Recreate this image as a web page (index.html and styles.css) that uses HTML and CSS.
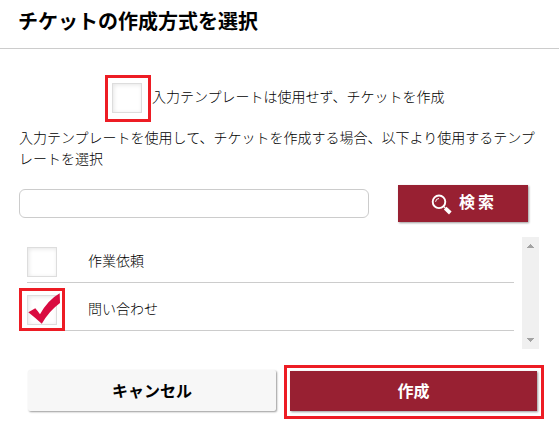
FILE: index.html
```html
<!DOCTYPE html>
<html lang="ja">
<head>
    <meta charset="UTF-8">
    <meta name="viewport" content="width=device-width, initial-scale=1.0">
    <title>チケットの作成方式を選択</title>
    <link rel="stylesheet" href="styles.css">
</head>
<body>
    <h2 class="dialog-title">チケットの作成方式を選択</h2>
    <div class="dialog-body">
        <div class="no-template">
            <span class="checkbox marked"></span>
            <span>入力テンプレートは使用せず、チケットを作成</span>
        </div>
        <p class="description">入力テンプレートを使用して、チケットを作成する場合、以下より使用するテンプレートを選択</p>
        <div class="search">
            <input class="search-input" type="text">
            <button class="btn btn-red btn-search" type="button">
                <svg class="search-icon" width="22" height="22" viewBox="0 0 22 22">
                    <circle cx="8" cy="7.8" r="6.3" fill="none" stroke="#fff" stroke-width="1.9"/>
                    <path d="M4.6 7.8A3.5 3.5 0 0 1 8 4.5" fill="none" stroke="#fff" stroke-width="1"/>
                    <path d="M12.4 12.2L14.5 14.3" stroke="#fff" stroke-width="1.2"/>
                    <path d="M14.2 14.2L19.3 19" stroke="#fff" stroke-width="3.8"/>
                </svg>
                <span>検索</span>
            </button>
        </div>
        <div class="template-list">
            <div class="rows">
                <div class="row">
                    <span class="checkbox"></span>
                    <span class="row-name">作業依頼</span>
                </div>
                <div class="row">
                    <span class="checkbox marked marked-row">
                        <svg class="check" width="33" height="32" viewBox="0 0 33 32">
                            <path d="M0.3 19.3L7.3 15.2Q9.5 17.5 12 21.3Q20 7 31.7 0.3L32 10Q21 18 13.8 30.8Q7.5 25 0.3 19.3Z" fill="#d90b40"/>
                        </svg>
                    </span>
                    <span class="row-name">問い合わせ</span>
                </div>
            </div>
            <div class="scrollbar">
                <svg width="7" height="4" viewBox="0 0 7 4" shape-rendering="crispEdges"><path d="M3 0h1v1h1v1h1v1h1v1H0V3h1V2h1V1h1z" fill="#a3a3a3"/></svg>
                <svg width="7" height="4" viewBox="0 0 7 4" shape-rendering="crispEdges"><path d="M0 0h7v1H6v1H5v1H4v1H3V3H2V2H1V1H0z" fill="#a3a3a3"/></svg>
            </div>
        </div>
        <div class="actions">
            <button class="btn btn-cancel" type="button">キャンセル</button>
            <button class="btn btn-red btn-create marked" type="button">作成</button>
        </div>
    </div>
</body>
</html>
```
FILE: styles.css
```css
* {
    box-sizing: border-box;
}

body {
    margin: 0;
    height: 433px;
    overflow: hidden;
    background-color: #fff;
    color: #000;
    font-family: "Noto Sans CJK JP", sans-serif;
    font-size: 14px;
    font-weight: 300;
    line-height: 21px;
}

.dialog-title {
    height: 49px;
    margin: 0;
    padding: 6px 18px 0;
    border-bottom: 1px solid #ccc;
    font-size: 20px;
    font-weight: bold;
    line-height: 30px;
}

.dialog-body {
    padding: 34px 19px 0;
}

.no-template {
    display: flex;
    gap: 10px;
    padding-left: 93px;
    line-height: 26px;
}

/* checkbox */
.checkbox {
    position: relative;
    flex: none;
    width: 30px;
    height: 30px;
    border: 1px solid #ddd;
    background-color: #fff;
    box-shadow: inset 1px 1px 4px rgba(0, 0, 0, 0.1);
}

.check {
    position: absolute;
    left: 0;
    top: -3px;
}

/* red frame around the controls to use */
.marked {
    position: relative;
}

.marked::after {
    content: "";
    position: absolute;
    inset: -9px -10px -10px -8px;
    border: 3px solid #ed1c24;
}

.marked-row::after {
    inset: -8px -9px -7px -9px;
}

.description {
    margin: 14px 0 0;
    width: 521px;
}

/* search */
.search {
    display: flex;
    margin-top: 16px;
}

.search-input {
    width: 350px;
    height: 29px;
    margin: 4px 29px 0 0;
    border: 1px solid #ccc;
    border-radius: 6px;
    background-color: #fff;
}

.btn {
    padding: 0;
    border: none;
    font-family: inherit;
    font-size: 16px;
    font-weight: bold;
    line-height: 24px;
    box-shadow: 1px 1px 2px rgba(0, 0, 0, 0.4);
}

.btn-red {
    background-color: #982032;
    color: #fff;
}

.btn-search {
    display: flex;
    width: 130px;
    height: 37px;
    padding: 4px 0 0 33px;
    letter-spacing: 3px;
}

.search-icon {
    margin: 5px 6px 0 0;
}

/* template list */
.template-list {
    display: flex;
    justify-content: space-between;
    height: 112px;
    margin: 15px 1px 0 8px;
}

.rows {
    width: 487px;
}

.row {
    display: flex;
    height: 48px;
    padding-top: 12px;
    border-bottom: 1px solid #ccc;
}

.row:first-child {
    height: 46px;
    padding-top: 10px;
}

.row-name {
    margin-left: 31px;
    line-height: 26px;
}

.scrollbar {
    display: flex;
    flex-direction: column;
    justify-content: space-between;
    align-items: center;
    width: 17px;
    padding: 7px 0;
    background-color: #f0f0f0;
}

/* buttons */
.actions {
    display: flex;
    gap: 14px;
    margin: 21px 0 0 9px;
}

.btn-cancel {
    width: 248px;
    height: 41px;
    padding-bottom: 2px;
    border-radius: 2px;
    background-color: #f7f7f7;
    color: #000;
}

.btn-create {
    width: 247px;
    height: 40px;
    margin-top: 1px;
    padding-bottom: 3px;
}

.btn-create::after {
    inset: -6px -7px -8px -6px;
}
```
